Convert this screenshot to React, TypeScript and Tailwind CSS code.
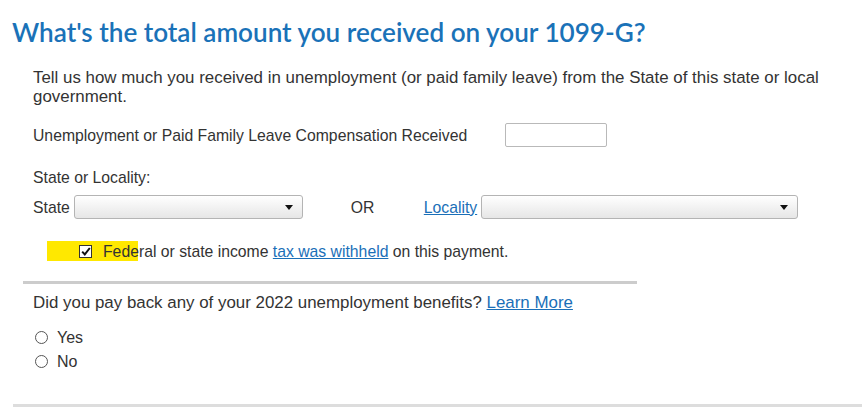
import React from 'react';

const Select: React.FC<{ width: string }> = ({ width }) => (
  <div
    className={`${width} h-[24px] rounded-[3px] border border-[#b4b4b4] bg-gradient-to-b from-[#ffffff] to-[#e6e6e6] flex items-center justify-end pr-[9px]`}
  >
    <svg width="8" height="5" viewBox="0 0 8 5">
      <path d="M0 0 L8 0 L4 5 Z" fill="#111" />
    </svg>
  </div>
);

const Radio: React.FC<{ label: string }> = ({ label }) => (
  <label className="flex items-center h-[19px]">
    <span className="ml-[2px] w-[13px] h-[13px] rounded-full border border-[#555] bg-white" />
    <span className="ml-[9px]">{label}</span>
  </label>
);

export default function App() {
  return (
    <div className="w-[862px] h-[407px] bg-white overflow-hidden font-['Liberation_Sans',Arial,sans-serif] text-[15.75px] leading-[19px] text-[#333]">
      {/* Title */}
      <h1 className="pt-[16px] pl-[12px] h-[48px] font-['Lato',sans-serif] font-semibold text-[26.1px] leading-[32px] text-[#1a72b8]">
        What's the total amount you received on your 1099-G?
      </h1>

      <div className="pl-[33px] w-[840px]">
        <p className="mt-[20px] text-[16.9px]">
          Tell us how much you received in unemployment (or paid family leave) from the State of this state or local
          government.
        </p>

        {/* Compensation */}
        <div className="mt-[17px] flex items-center h-[24px]">
          <span className="w-[472px]">Unemployment or Paid Family Leave Compensation Received</span>
          <div className="w-[102px] h-[24px] rounded-[2px] border border-[#b9b9b9] bg-white" />
        </div>

        {/* State / Locality */}
        <p className="mt-[21px]">State or Locality:</p>
        <div className="mt-[8px] flex items-center h-[24px]">
          <span className="mr-[4px]">State</span>
          <Select width="w-[229px]" />
          <span className="ml-[48px] w-[73px]">OR</span>
          <a className="text-[#1a6fb8] underline mr-[4px]">Locality</a>
          <Select width="w-[317px]" />
        </div>

        {/* Withheld checkbox */}
        <div className="relative mt-[22px] flex items-center h-[20px]">
          <span className="absolute left-[14px] top-0 w-[91px] h-[20px] bg-[#ffe800]" />
          <span className="relative ml-[46px] w-[13px] h-[13px] border border-[#333] bg-white flex items-center justify-center">
            <svg width="10" height="9" viewBox="0 0 10 9">
              <path d="M1.2 4.6 L3.8 7.4 L8.8 1" stroke="#111" strokeWidth="2" fill="none" />
            </svg>
          </span>
          <span className="relative ml-[11px]">
            Federal or state income{' '}
            <a className="text-[#1a6fb8] underline">tax was withheld</a> on this payment.
          </span>
        </div>
      </div>

      <div className="ml-[23px] mt-[20px] w-[614px] h-[3px] bg-[#cccccc]" />

      <div className="pl-[33px]">
        <p className="mt-[9px] text-[16.9px]">
          Did you pay back any of your 2022 unemployment benefits?{' '}
          <a className="text-[#1a6fb8] underline">Learn More</a>
        </p>
        <div className="mt-[16px] flex flex-col gap-[5px] text-[16px]">
          <Radio label="Yes" />
          <Radio label="No" />
        </div>
      </div>

      <div className="ml-[13px] mt-[33px] h-[3px] bg-[#dddddd]" />
    </div>
  );
}
